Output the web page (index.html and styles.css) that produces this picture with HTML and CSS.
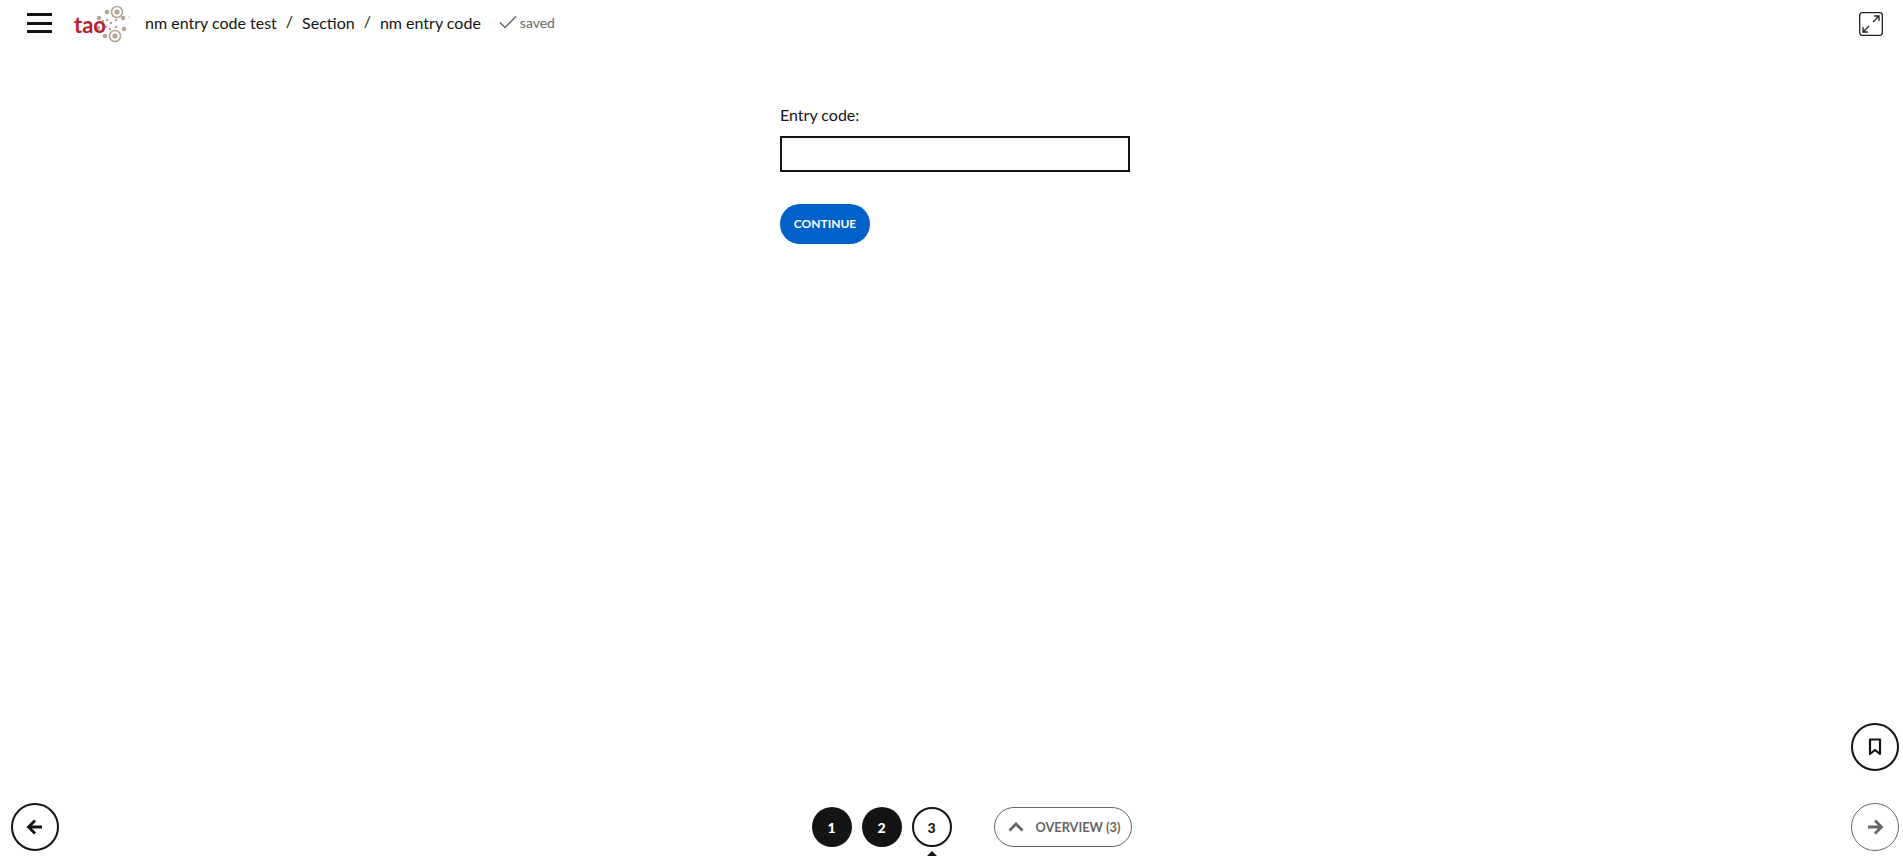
FILE: index.html
```html
<!DOCTYPE html>
<html lang="en">
<head>
  <meta charset="UTF-8" />
  <title>nm entry code test</title>
  <link rel="stylesheet" href="styles.css">
</head>
<body>
  <header class="topbar">
    <button class="menu-btn" aria-label="Menu">
      <span></span><span></span><span></span>
    </button>

    <div class="logo">
      <span class="logo-text">tao</span>
      <svg class="logo-mark" width="56" height="44" viewBox="0 0 56 44">
        <g fill="#b3a596">
          <circle cx="33" cy="11" r="2.3"/>
          <circle cx="31" cy="35" r="2.3"/>
          <circle cx="49" cy="17" r="2.2"/>
          <circle cx="50" cy="28" r="2.2"/>
          <circle cx="25" cy="17" r="2.2"/>
          <circle cx="24" cy="27" r="2.2"/>
          <circle cx="29" cy="20" r="1.3"/>
          <circle cx="33" cy="19" r="1.3"/>
          <circle cx="37" cy="22" r="1.3"/>
          <circle cx="42" cy="19" r="1.3"/>
          <circle cx="42" cy="26" r="1.3"/>
          <circle cx="36" cy="28" r="1.2"/>
          <circle cx="32" cy="26" r="1.2"/>
          <circle cx="39" cy="15" r="1"/>
          <circle cx="55" cy="16" r="0.7"/>
        </g>
        <circle cx="43" cy="11" r="5.5" fill="none" stroke="#b3a596" stroke-width="1.6"/>
        <circle cx="43" cy="11" r="2.6" fill="#b3a596"/>
        <circle cx="41" cy="35" r="5.5" fill="none" stroke="#b3a596" stroke-width="1.6"/>
        <circle cx="41" cy="35" r="2.6" fill="#b3a596"/>
      </svg>
    </div>

    <nav class="crumbs">
      <span>nm entry code test</span>
      <span class="sep">/</span>
      <span>Section</span>
      <span class="sep">/</span>
      <span>nm entry code</span>
    </nav>

    <div class="saved">
      <svg width="18" height="14" viewBox="0 0 18 14"><path d="M1 7.5 L6 12.5 L17 1.5" fill="none" stroke="#666" stroke-width="1.5"/></svg>
      <span>saved</span>
    </div>

    <button class="fullscreen-btn" aria-label="Fullscreen">
      <svg width="24" height="24" viewBox="0 0 24 24" fill="none" stroke="#222" stroke-width="1.3">
        <rect x="0.7" y="0.7" width="22.6" height="22.6" rx="2.5"/>
        <path d="M14 10 L20 4 M15 4 H20 V9 M10 14 L4 20 M4 15 V20 H9"/>
      </svg>
    </button>
  </header>

  <main class="content">
    <label class="field-label" for="entryCode">Entry code:</label>
    <input class="field-input" id="entryCode" type="text" />
    <button class="continue-btn">CONTINUE</button>
  </main>

  <button class="round-btn bookmark-btn" aria-label="Bookmark">
    <svg width="14" height="18" viewBox="0 0 14 18"><path d="M2 1.5 H12 V16 L7 12 L2 16 Z" fill="none" stroke="#111" stroke-width="2.2" stroke-linejoin="round"/></svg>
  </button>

  <footer class="bottombar">
    <button class="round-btn" aria-label="Previous">
      <svg width="18" height="18" viewBox="0 0 18 18"><path d="M16 9 H3 M9 2.5 L2.5 9 L9 15.5" fill="none" stroke="#111" stroke-width="2.8"/></svg>
    </button>

    <div class="pager">
      <button class="page-btn done">1</button>
      <button class="page-btn done">2</button>
      <button class="page-btn current">3</button>
      <button class="overview-btn">
        <svg width="16" height="10" viewBox="0 0 16 10"><path d="M1.5 8.5 L8 2 L14.5 8.5" fill="none" stroke="#666" stroke-width="2.8"/></svg>
        <span>OVERVIEW (3)</span>
      </button>
    </div>

    <button class="round-btn next" aria-label="Next">
      <svg width="18" height="18" viewBox="0 0 18 18"><path d="M2 9 H15 M9 2.5 L15.5 9 L9 15.5" fill="none" stroke="#666" stroke-width="2.8"/></svg>
    </button>
  </footer>
</body>
</html>
```

FILE: styles.css
```css
:root {
  --dark: #141414;
  --grey: #666;
  --blue: #0061c8;
}

* {
  margin: 0;
  padding: 0;
  box-sizing: border-box;
}

body {
  font-family: 'Lato', 'Open Sans', sans-serif;
  color: var(--dark);
  background: white;
  height: 100vh;
  display: flex;
  flex-direction: column;
  position: relative;
  overflow: hidden;
}

button {
  font-family: inherit;
  background: none;
  border: none;
  cursor: pointer;
}

.topbar {
  display: flex;
  align-items: center;
  height: 46px;
  padding: 0 20px 0 27px;
}

.menu-btn {
  width: 25px;
  height: 20px;
  display: flex;
  flex-direction: column;
  justify-content: space-between;
  margin-right: 22px;
}

.menu-btn span {
  display: block;
  height: 3px;
  background: var(--dark);
}

.logo {
  display: flex;
  align-items: center;
  position: relative;
  width: 56px;
  height: 44px;
  margin-right: 15px;
}

.logo-text {
  position: absolute;
  left: 0;
  top: 12px;
  font-size: 22px;
  line-height: 24px;
  font-weight: 700;
  color: #b5202e;
  z-index: 1;
}

.logo-mark {
  position: absolute;
  left: 0;
  top: 0;
}

.crumbs {
  display: flex;
  align-items: center;
  gap: 8px;
  font-size: 16px;
  padding-bottom: 2px;
}

.crumbs .sep {
  position: relative;
  top: -2px;
  padding: 0 1px;
}

.saved {
  display: flex;
  align-items: center;
  gap: 3px;
  margin-left: 18px;
  padding-bottom: 2px;
  font-size: 14px;
  color: var(--grey);
}

.fullscreen-btn {
  margin-left: auto;
  display: flex;
  position: relative;
  top: 1px;
}

.content {
  flex: 1;
  display: flex;
  flex-direction: column;
  align-items: flex-start;
  padding: 60px 0 0 780px;
}

.field-label {
  font-size: 16px;
  line-height: 18px;
  margin-bottom: 12px;
}

.field-input {
  width: 350px;
  height: 36px;
  border: 2px solid var(--dark);
  background: white;
  margin-bottom: 32px;
}

.continue-btn {
  width: 90px;
  height: 40px;
  border-radius: 20px;
  background: var(--blue);
  color: white;
  font-size: 12px;
  font-weight: 700;
  padding-bottom: 2px;
}

.bottombar {
  display: grid;
  grid-template-columns: 1fr auto 1fr;
  align-items: center;
  height: 48px;
  margin-bottom: 9px;
  padding: 0 4px 0 11px;
}

.round-btn {
  width: 48px;
  height: 48px;
  border-radius: 50%;
  border: 2px solid var(--dark);
  background: white;
  display: flex;
  align-items: center;
  justify-content: center;
}

.round-btn.next {
  justify-self: end;
  border: 1px solid var(--grey);
}

.bookmark-btn {
  position: absolute;
  right: 4px;
  top: 723px;
}

.pager {
  display: flex;
  align-items: center;
  gap: 10px;
  padding-left: 33px;
}

.page-btn {
  width: 40px;
  height: 40px;
  border-radius: 50%;
  font-size: 14px;
  font-weight: 900;
  position: relative;
}

.page-btn.done {
  background: var(--dark);
  color: white;
}

.page-btn.current {
  border: 2px solid var(--dark);
  color: var(--dark);
}

.page-btn.current::after {
  content: "";
  position: absolute;
  left: 13px;
  bottom: -11px;
  border-left: 5px solid transparent;
  border-right: 5px solid transparent;
  border-bottom: 5px solid var(--dark);
}

.overview-btn {
  width: 138px;
  height: 40px;
  margin-left: 32px;
  border: 1px solid var(--grey);
  border-radius: 20px;
  display: flex;
  align-items: center;
  gap: 12px;
  padding-left: 13px;
  color: var(--grey);
  font-size: 12.75px;
  font-weight: 700;
}
```
